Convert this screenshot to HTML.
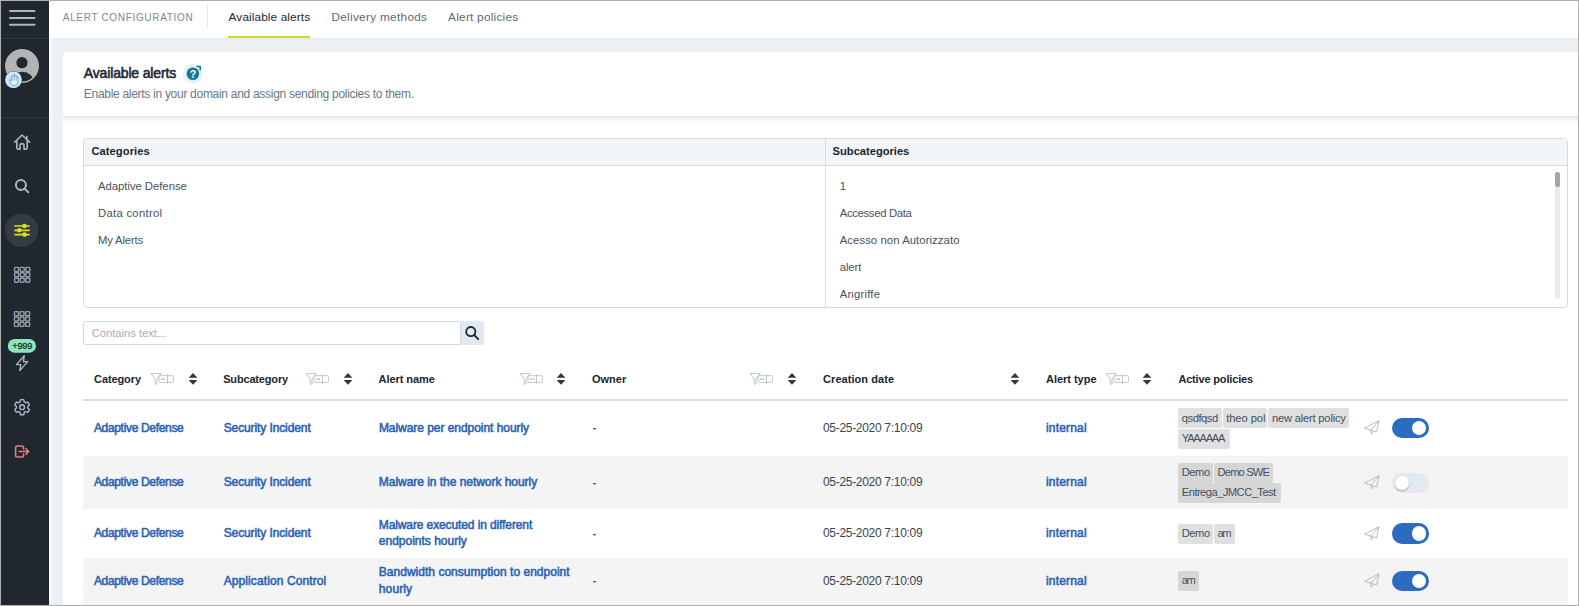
<!DOCTYPE html>
<html><head><meta charset="utf-8">
<style>
*{box-sizing:border-box;margin:0;padding:0}
html,body{width:1579px;height:606px;overflow:hidden;background:#edf1f4;font-family:"Liberation Sans",sans-serif;position:relative}
.a{position:absolute;white-space:nowrap}
#frame{position:absolute;left:0;top:0;width:1579px;height:606px;border:1px solid #afafaf;pointer-events:none;z-index:50}
.tog{position:absolute;width:37.3px;height:20.3px;border-radius:10.2px;background:#2b6cc0}
.tog::after{content:"";position:absolute;width:14.2px;height:14.2px;border-radius:50%;background:#fff;top:3.05px;left:20px}
.tog.off{background:#e3e9f0}
.tog.off::after{left:3px;box-shadow:0 1px 2px rgba(0,0,0,.3)}
</style></head>
<body>
<div style="position:absolute;left:49px;top:1px;width:1529px;height:37px;background:#fff;"></div>
<div style="position:absolute;left:49px;top:38px;width:3px;height:568px;background:#f6f8fa;"></div>
<div style="position:absolute;left:52px;top:38px;width:1526px;height:3px;background:linear-gradient(#e6eaed,#edf1f4);"></div>
<div style="position:absolute;left:63px;top:52px;width:1515px;height:64px;background:#fff;border-top-left-radius:5px;"></div>
<div style="position:absolute;left:63px;top:116px;width:1515px;height:490px;background:#fff;"></div>
<div style="position:absolute;left:63px;top:116px;width:1515px;height:9px;background:linear-gradient(#e6eaee,#f6f8f9 45%,#fff);"></div>
<div style="position:absolute;left:1px;top:1px;width:48px;height:605px;background:#20272f;"></div>
<div style="position:absolute;left:1px;top:38px;width:48px;height:1px;background:#30373f;"></div>
<div style="position:absolute;left:1px;top:117px;width:48px;height:1px;background:#30373f;"></div>
<svg style="position:absolute;left:0;top:0" width="50" height="606" viewBox="0 0 50 606"><g stroke="#a9b8c5" stroke-width="2" stroke-linecap="round"><line x1="10" y1="11" x2="34.5" y2="11"/><line x1="10" y1="18" x2="34.5" y2="18"/><line x1="10" y1="24.8" x2="34.5" y2="24.8"/></g><defs><clipPath id="avc"><circle cx="22" cy="66" r="15.5"/></clipPath></defs><circle cx="22" cy="66" r="17" fill="#b4b4b4"/><circle cx="22" cy="62.7" r="5.6" fill="#20272f"/><g clip-path="url(#avc)"><ellipse cx="22.5" cy="82" rx="11" ry="10.3" fill="#20272f"/></g><circle cx="13.5" cy="79.8" r="8.8" fill="#20272f" opacity="0.7"/><circle cx="13.5" cy="79.8" r="8.4" fill="#c9e9fa"/><path d="M11 84.2 L9.3 80.2 Q9.1 79.2 10 79.5 L11.5 81.2 V76.6 Q11.5 75.8 12.3 75.8 Q13.1 75.8 13.1 76.6 V75.3 Q13.1 74.5 13.9 74.5 Q14.7 74.5 14.7 75.3 V76 Q14.7 75.3 15.5 75.3 Q16.3 75.3 16.3 76 V77.3 Q16.3 76.6 17.1 76.6 Q17.9 76.6 17.9 77.3 V82.3 Q17.9 85.6 15.1 85.6 H12.9 Q11.6 85.6 11 84.2 Z" fill="#e8f6fd" stroke="#5d8fb6" stroke-width="0.75" stroke-linejoin="round"/><path d="M13.1 76.6 V80.6 M14.7 75.3 V80.6 M16.3 76 V80.6" stroke="#6d9cc0" stroke-width="0.6" fill="none"/><g stroke="#a9b8c5" stroke-width="1.6" fill="none" stroke-linecap="round" stroke-linejoin="round"><path d="M14.6 142.2 L22 135 L29.6 142.2"/><path d="M16.8 140.5 V147.8 Q16.8 149.2 18.2 149.2 H20 V145.3 Q20 143.6 22 143.6 Q24 143.6 24 145.3 V149.2 H25.8 Q27.2 149.2 27.2 147.8 V140.5"/><path d="M26.8 136.4 V139.2"/></g><g stroke="#a9b8c5" stroke-width="2" fill="none" stroke-linecap="round"><circle cx="20.9" cy="185" r="5"/><line x1="24.6" y1="188.7" x2="28.4" y2="192.4"/></g><circle cx="21.5" cy="230.3" r="16.7" fill="#343b43"/><g stroke="#d7e41b" stroke-width="1.7" stroke-linecap="round"><line x1="15" y1="226" x2="29" y2="226"/><line x1="15" y1="230.3" x2="29" y2="230.3"/><line x1="15" y1="234.6" x2="29" y2="234.6"/></g><g fill="#d7e41b"><circle cx="24.5" cy="226" r="2.3"/><circle cx="19.3" cy="230.3" r="2.3"/><circle cx="24.5" cy="234.6" r="2.3"/></g><rect x="14.6" y="267.4" width="4.0" height="4.0" rx="0.7" fill="#20272f" stroke="#8f9daa" stroke-width="1.4"/><rect x="14.6" y="272.8" width="4.0" height="4.0" rx="0.7" fill="#20272f" stroke="#8f9daa" stroke-width="1.4"/><rect x="14.6" y="278.2" width="4.0" height="4.0" rx="0.7" fill="#20272f" stroke="#8f9daa" stroke-width="1.4"/><rect x="20.2" y="267.4" width="4.0" height="4.0" rx="0.7" fill="#20272f" stroke="#8f9daa" stroke-width="1.4"/><rect x="20.2" y="272.8" width="4.0" height="4.0" rx="0.7" fill="#20272f" stroke="#8f9daa" stroke-width="1.4"/><rect x="20.2" y="278.2" width="4.0" height="4.0" rx="0.7" fill="#20272f" stroke="#8f9daa" stroke-width="1.4"/><rect x="25.8" y="267.4" width="4.0" height="4.0" rx="0.7" fill="#20272f" stroke="#8f9daa" stroke-width="1.4"/><rect x="25.8" y="272.8" width="4.0" height="4.0" rx="0.7" fill="#20272f" stroke="#8f9daa" stroke-width="1.4"/><rect x="25.8" y="278.2" width="4.0" height="4.0" rx="0.7" fill="#20272f" stroke="#8f9daa" stroke-width="1.4"/><rect x="14.4" y="311.6" width="4.0" height="4.0" rx="0.7" fill="#20272f" stroke="#8f9daa" stroke-width="1.4"/><rect x="14.4" y="317.0" width="4.0" height="4.0" rx="0.7" fill="#20272f" stroke="#8f9daa" stroke-width="1.4"/><rect x="14.4" y="322.4" width="4.0" height="4.0" rx="0.7" fill="#20272f" stroke="#8f9daa" stroke-width="1.4"/><rect x="20.0" y="311.6" width="4.0" height="4.0" rx="0.7" fill="#20272f" stroke="#8f9daa" stroke-width="1.4"/><rect x="20.0" y="317.0" width="4.0" height="4.0" rx="0.7" fill="#20272f" stroke="#8f9daa" stroke-width="1.4"/><rect x="20.0" y="322.4" width="4.0" height="4.0" rx="0.7" fill="#20272f" stroke="#8f9daa" stroke-width="1.4"/><rect x="25.6" y="311.6" width="4.0" height="4.0" rx="0.7" fill="#20272f" stroke="#8f9daa" stroke-width="1.4"/><rect x="25.6" y="317.0" width="4.0" height="4.0" rx="0.7" fill="#20272f" stroke="#8f9daa" stroke-width="1.4"/><rect x="25.6" y="322.4" width="4.0" height="4.0" rx="0.7" fill="#20272f" stroke="#8f9daa" stroke-width="1.4"/><rect x="7.8" y="339" width="28.2" height="13.8" rx="6.9" fill="#8ee6bf"/><text x="12.2" y="348.9" font-family="Liberation Sans" font-size="9.2" fill="#1b382c" stroke="#1b382c" stroke-width="0.3" textLength="20.2" lengthAdjust="spacing">+999</text><path d="M24.2 355.8 L16.4 364.6 H20.8 L19.8 370.6 L27.6 361.6 H23.4 Z" stroke="#a9b8c5" stroke-width="1.4" fill="none" stroke-linejoin="round"/><path d="M19.96 401.92 L20.50 399.67 L23.70 399.67 L24.24 401.92 L25.61 402.71 L27.82 402.05 L29.42 404.82 L27.74 406.41 L27.74 407.99 L29.42 409.58 L27.82 412.35 L25.61 411.69 L24.24 412.48 L23.70 414.73 L20.50 414.73 L19.96 412.48 L18.59 411.69 L16.38 412.35 L14.78 409.58 L16.46 407.99 L16.46 406.41 L14.78 404.82 L16.38 402.05 L18.59 402.71 Z" stroke="#a9b8c5" stroke-width="1.4" fill="none" stroke-linejoin="round"/><circle cx="22.1" cy="407.2" r="2.4" stroke="#a9b8c5" stroke-width="1.4" fill="none"/><g stroke="#e07f7e" stroke-width="1.6" fill="none" stroke-linecap="round" stroke-linejoin="round"><path d="M23.6 448.9 V447.6 Q23.6 446 22 446 H17.2 Q15.6 446 15.6 447.6 V455.4 Q15.6 457 17.2 457 H22 Q23.6 457 23.6 455.4 V454.1"/><path d="M19.3 451.5 H28.4 M26.1 448.9 L28.6 451.5 L26.1 454.1"/></g></svg>
<div style="position:absolute;left:207px;top:5px;width:1px;height:23px;background:#e1e7ec;"></div>
<div style="position:absolute;left:228px;top:36px;width:82px;height:2px;background:#c7d92b;"></div>
<svg style="position:absolute;left:181px;top:62px" width="24" height="24" viewBox="181 62 24 24"><circle cx="192.9" cy="73.8" r="10" fill="#e5f1f3"/><circle cx="192.9" cy="73.8" r="6.3" fill="#18788f"/><text x="192.9" y="77.6" text-anchor="middle" font-family="Liberation Sans" font-weight="bold" font-size="10.5" fill="#fff">?</text><path d="M196.4 66.6 H200.2 V70.4" stroke="#18798f" stroke-width="1.5" fill="none"/></svg>
<div style="position:absolute;left:83px;top:138px;width:1485px;height:170px;border:1px solid #d2dce5;border-radius:4px;overflow:hidden;background:#fff"><div style="position:absolute;left:0;top:0;width:1485px;height:27px;background:#f3f6f9;border-bottom:1px solid #d2dce5"></div><div style="position:absolute;left:741px;top:0;width:1px;height:170px;background:#d2dce5"></div></div>
<div style="position:absolute;left:1555px;top:172px;width:5px;height:127px;background:#ebebeb;border-radius:2.5px;"></div>
<div style="position:absolute;left:1555px;top:172px;width:5px;height:15px;background:#a5a5a5;border-radius:2.5px;"></div>
<div style="position:absolute;left:83px;top:321px;width:378px;height:24px;border:1px solid #cfdae3;border-radius:3px 0 0 3px;background:#fff"></div>
<div style="position:absolute;left:461px;top:321px;width:23px;height:24px;background:#e2e9f0;border-radius:0 3px 3px 0;"></div>
<svg style="position:absolute;left:460px;top:321px" width="24" height="24" viewBox="460 321 24 24"><g stroke="#1b2631" stroke-width="1.8" fill="none" stroke-linecap="round"><circle cx="470.8" cy="331.6" r="4.6"/><line x1="474.2" y1="335" x2="478.3" y2="339.1"/></g></svg>
<svg style="position:absolute;left:148px;top:368px" width="30" height="22" viewBox="0 0 30 22"><g stroke="#b9c0c7" stroke-width="0.9" fill="none" stroke-linejoin="round"><path d="M3 5.6 H13.4 L9 11 V15.8 L7.2 16.4 V11 Z"/><rect x="11" y="7.7" width="14.4" height="6.7" rx="0.8"/><line x1="19.5" y1="6.2" x2="19.5" y2="15.8"/></g><g fill="#b9c0c7"><rect x="13.3" y="10.2" width="1.6" height="1.8"/><rect x="15.6" y="10.2" width="1.6" height="1.8"/></g></svg>
<svg style="position:absolute;left:302.8px;top:368px" width="30" height="22" viewBox="0 0 30 22"><g stroke="#b9c0c7" stroke-width="0.9" fill="none" stroke-linejoin="round"><path d="M3 5.6 H13.4 L9 11 V15.8 L7.2 16.4 V11 Z"/><rect x="11" y="7.7" width="14.4" height="6.7" rx="0.8"/><line x1="19.5" y1="6.2" x2="19.5" y2="15.8"/></g><g fill="#b9c0c7"><rect x="13.3" y="10.2" width="1.6" height="1.8"/><rect x="15.6" y="10.2" width="1.6" height="1.8"/></g></svg>
<svg style="position:absolute;left:516.6px;top:368px" width="30" height="22" viewBox="0 0 30 22"><g stroke="#b9c0c7" stroke-width="0.9" fill="none" stroke-linejoin="round"><path d="M3 5.6 H13.4 L9 11 V15.8 L7.2 16.4 V11 Z"/><rect x="11" y="7.7" width="14.4" height="6.7" rx="0.8"/><line x1="19.5" y1="6.2" x2="19.5" y2="15.8"/></g><g fill="#b9c0c7"><rect x="13.3" y="10.2" width="1.6" height="1.8"/><rect x="15.6" y="10.2" width="1.6" height="1.8"/></g></svg>
<svg style="position:absolute;left:747.3px;top:368px" width="30" height="22" viewBox="0 0 30 22"><g stroke="#b9c0c7" stroke-width="0.9" fill="none" stroke-linejoin="round"><path d="M3 5.6 H13.4 L9 11 V15.8 L7.2 16.4 V11 Z"/><rect x="11" y="7.7" width="14.4" height="6.7" rx="0.8"/><line x1="19.5" y1="6.2" x2="19.5" y2="15.8"/></g><g fill="#b9c0c7"><rect x="13.3" y="10.2" width="1.6" height="1.8"/><rect x="15.6" y="10.2" width="1.6" height="1.8"/></g></svg>
<svg style="position:absolute;left:1103px;top:368px" width="30" height="22" viewBox="0 0 30 22"><g stroke="#b9c0c7" stroke-width="0.9" fill="none" stroke-linejoin="round"><path d="M3 5.6 H13.4 L9 11 V15.8 L7.2 16.4 V11 Z"/><rect x="11" y="7.7" width="14.4" height="6.7" rx="0.8"/><line x1="19.5" y1="6.2" x2="19.5" y2="15.8"/></g><g fill="#b9c0c7"><rect x="13.3" y="10.2" width="1.6" height="1.8"/><rect x="15.6" y="10.2" width="1.6" height="1.8"/></g></svg>
<svg style="position:absolute;left:186.7px;top:368px" width="12" height="22" viewBox="186.7 368 12 22"><path d="M188.29999999999998 377.8 L192.7 373.1 L197.1 377.8 Z M188.29999999999998 380 L197.1 380 L192.7 384.7 Z" fill="#2e3944"/></svg>
<svg style="position:absolute;left:341.5px;top:368px" width="12" height="22" viewBox="341.5 368 12 22"><path d="M343.1 377.8 L347.5 373.1 L351.9 377.8 Z M343.1 380 L351.9 380 L347.5 384.7 Z" fill="#2e3944"/></svg>
<svg style="position:absolute;left:555px;top:368px" width="12" height="22" viewBox="555 368 12 22"><path d="M556.6 377.8 L561 373.1 L565.4 377.8 Z M556.6 380 L565.4 380 L561 384.7 Z" fill="#2e3944"/></svg>
<svg style="position:absolute;left:786px;top:368px" width="12" height="22" viewBox="786 368 12 22"><path d="M787.6 377.8 L792 373.1 L796.4 377.8 Z M787.6 380 L796.4 380 L792 384.7 Z" fill="#2e3944"/></svg>
<svg style="position:absolute;left:1008.6px;top:368px" width="12" height="22" viewBox="1008.6 368 12 22"><path d="M1010.2 377.8 L1014.6 373.1 L1019.0 377.8 Z M1010.2 380 L1019.0 380 L1014.6 384.7 Z" fill="#2e3944"/></svg>
<svg style="position:absolute;left:1141px;top:368px" width="12" height="22" viewBox="1141 368 12 22"><path d="M1142.6 377.8 L1147 373.1 L1151.4 377.8 Z M1142.6 380 L1151.4 380 L1147 384.7 Z" fill="#2e3944"/></svg>
<div style="position:absolute;left:83px;top:399px;width:1485px;height:2px;background:#d4dfe9;"></div>
<div style="position:absolute;left:83px;top:456px;width:1485px;height:53px;background:#f4f4f4;"></div>
<div style="position:absolute;left:83px;top:558px;width:1485px;height:48px;background:#f4f4f4;"></div>
<div style="position:absolute;left:593px;top:428px;width:3px;height:1px;background:#2a62b6;"></div>
<div style="position:absolute;left:593px;top:429px;width:3px;height:1px;background:rgba(42,98,182,0.35);"></div>
<svg style="position:absolute;left:1360px;top:416.3px" width="24" height="24" viewBox="1360 416.3 24 24"><g stroke="#b5b5b5" stroke-width="0.9" fill="none" stroke-linejoin="round" transform="translate(0 0.0)"><path d="M1379.1 421 L1364.6 428.4 L1370.9 430.5 L1376.5 432.3 Z M1379.1 421 L1370.9 430.5 L1371.2 434.4 L1373.4 431.3"/></g></svg>
<div style="position:absolute;left:593px;top:483px;width:3px;height:1px;background:#2a62b6;"></div>
<div style="position:absolute;left:593px;top:484px;width:3px;height:1px;background:rgba(42,98,182,0.35);"></div>
<svg style="position:absolute;left:1360px;top:470.8px" width="24" height="24" viewBox="1360 470.8 24 24"><g stroke="#b5b5b5" stroke-width="0.9" fill="none" stroke-linejoin="round" transform="translate(0 54.5)"><path d="M1379.1 421 L1364.6 428.4 L1370.9 430.5 L1376.5 432.3 Z M1379.1 421 L1370.9 430.5 L1371.2 434.4 L1373.4 431.3"/></g></svg>
<div style="position:absolute;left:593px;top:534px;width:3px;height:1px;background:#2a62b6;"></div>
<div style="position:absolute;left:593px;top:535px;width:3px;height:1px;background:rgba(42,98,182,0.35);"></div>
<svg style="position:absolute;left:1360px;top:521.6px" width="24" height="24" viewBox="1360 521.6 24 24"><g stroke="#b5b5b5" stroke-width="0.9" fill="none" stroke-linejoin="round" transform="translate(0 105.30000000000001)"><path d="M1379.1 421 L1364.6 428.4 L1370.9 430.5 L1376.5 432.3 Z M1379.1 421 L1370.9 430.5 L1371.2 434.4 L1373.4 431.3"/></g></svg>
<div style="position:absolute;left:593px;top:581px;width:3px;height:1px;background:#2a62b6;"></div>
<div style="position:absolute;left:593px;top:582px;width:3px;height:1px;background:rgba(42,98,182,0.35);"></div>
<svg style="position:absolute;left:1360px;top:569.2px" width="24" height="24" viewBox="1360 569.2 24 24"><g stroke="#b5b5b5" stroke-width="0.9" fill="none" stroke-linejoin="round" transform="translate(0 152.90000000000003)"><path d="M1379.1 421 L1364.6 428.4 L1370.9 430.5 L1376.5 432.3 Z M1379.1 421 L1370.9 430.5 L1371.2 434.4 L1373.4 431.3"/></g></svg>
<div style="position:absolute;left:1178.2px;top:408.2px;width:43.5px;height:20px;background:rgba(0,0,0,0.12);border-radius:2px;"></div>
<div style="position:absolute;left:1222.6px;top:408.2px;width:44.6px;height:20px;background:rgba(0,0,0,0.12);border-radius:2px;"></div>
<div style="position:absolute;left:1268.4px;top:408.2px;width:80.9px;height:20px;background:rgba(0,0,0,0.12);border-radius:2px;"></div>
<div style="position:absolute;left:1178.2px;top:428.5px;width:51.4px;height:20px;background:rgba(0,0,0,0.12);border-radius:2px;"></div>
<div style="position:absolute;left:1178.2px;top:462.7px;width:34.4px;height:20px;background:rgba(0,0,0,0.12);border-radius:2px;"></div>
<div style="position:absolute;left:1214px;top:462.7px;width:58.5px;height:20px;background:rgba(0,0,0,0.12);border-radius:2px;"></div>
<div style="position:absolute;left:1178.2px;top:483.1px;width:102.5px;height:20px;background:rgba(0,0,0,0.12);border-radius:2px;"></div>
<div style="position:absolute;left:1178.1px;top:523.7px;width:34.7px;height:20px;background:rgba(0,0,0,0.12);border-radius:2px;"></div>
<div style="position:absolute;left:1213.8px;top:523.7px;width:20.8px;height:20px;background:rgba(0,0,0,0.12);border-radius:2px;"></div>
<div style="position:absolute;left:1178.1px;top:571.1px;width:20.7px;height:20px;background:rgba(0,0,0,0.12);border-radius:2px;"></div>
<div class="tog" style="left:1392px;top:418.1px"></div>
<div class="tog off" style="left:1392px;top:472.8px"></div>
<div class="tog" style="left:1392px;top:523.4px"></div>
<div class="tog" style="left:1392px;top:571px"></div>
<div class="a" style="left:62.80px;top:13px;font-size:10px;line-height:10px;color:#7b8895;letter-spacing:0.669px;">ALERT CONFIGURATION</div>
<div class="a" style="left:228.60px;top:12px;font-size:11.8px;line-height:11.8px;color:#1c2631;letter-spacing:0.114px;">Available alerts</div>
<div class="a" style="left:331.40px;top:12px;font-size:11.8px;line-height:11.8px;color:#5b6976;letter-spacing:0.298px;">Delivery methods</div>
<div class="a" style="left:448.10px;top:12px;font-size:11.8px;line-height:11.8px;color:#5b6976;letter-spacing:0.248px;">Alert policies</div>
<div class="a" style="left:83.80px;top:66px;font-size:14px;line-height:14px;color:#1b2631;-webkit-text-stroke:0.55px #1b2631;letter-spacing:-0.152px;">Available alerts</div>
<div class="a" style="left:83.80px;top:88px;font-size:12px;line-height:12px;color:#6a7784;letter-spacing:-0.291px;">Enable alerts in your domain and assign sending policies to them.</div>
<div class="a" style="left:91.40px;top:146px;font-size:11.2px;line-height:11.2px;color:#1b2631;font-weight:700;letter-spacing:0.056px;">Categories</div>
<div class="a" style="left:832.60px;top:146px;font-size:11.2px;line-height:11.2px;color:#1b2631;font-weight:700;letter-spacing:-0.031px;">Subcategories</div>
<div class="a" style="left:98.00px;top:181px;font-size:11.3px;line-height:11.3px;color:#47525e;letter-spacing:-0.026px;">Adaptive Defense</div>
<div class="a" style="left:98.00px;top:208px;font-size:11.3px;line-height:11.3px;color:#47525e;letter-spacing:0.282px;">Data control</div>
<div class="a" style="left:98.00px;top:235px;font-size:11.3px;line-height:11.3px;color:#47525e;letter-spacing:-0.166px;">My Alerts</div>
<div class="a" style="left:839.70px;top:181px;font-size:11.3px;line-height:11.3px;color:#47525e;height:119px;overflow:hidden;">1</div>
<div class="a" style="left:839.70px;top:208px;font-size:11.3px;line-height:11.3px;color:#47525e;letter-spacing:-0.316px;height:92px;overflow:hidden;">Accessed Data</div>
<div class="a" style="left:839.70px;top:235px;font-size:11.3px;line-height:11.3px;color:#47525e;letter-spacing:0.081px;height:65px;overflow:hidden;">Acesso non Autorizzato</div>
<div class="a" style="left:839.70px;top:262px;font-size:11.3px;line-height:11.3px;color:#47525e;letter-spacing:-0.084px;height:38px;overflow:hidden;">alert</div>
<div class="a" style="left:839.70px;top:289px;font-size:11.3px;line-height:11.3px;color:#47525e;letter-spacing:0.229px;height:11px;overflow:hidden;">Angriffe</div>
<div class="a" style="left:91.70px;top:328px;font-size:11.2px;line-height:11.2px;color:#a2aebb;">Contains text...</div>
<div class="a" style="left:94.10px;top:374px;font-size:11px;line-height:11px;color:#1b2631;font-weight:700;letter-spacing:-0.109px;">Category</div>
<div class="a" style="left:223.20px;top:374px;font-size:11px;line-height:11px;color:#1b2631;font-weight:700;letter-spacing:-0.171px;">Subcategory</div>
<div class="a" style="left:378.50px;top:374px;font-size:11px;line-height:11px;color:#1b2631;font-weight:700;letter-spacing:-0.059px;">Alert name</div>
<div class="a" style="left:592.00px;top:374px;font-size:11px;line-height:11px;color:#1b2631;font-weight:700;">Owner</div>
<div class="a" style="left:823.10px;top:374px;font-size:11px;line-height:11px;color:#1b2631;font-weight:700;letter-spacing:0.052px;">Creation date</div>
<div class="a" style="left:1046.00px;top:374px;font-size:11px;line-height:11px;color:#1b2631;font-weight:700;letter-spacing:-0.024px;">Alert type</div>
<div class="a" style="left:1178.40px;top:374px;font-size:11px;line-height:11px;color:#1b2631;font-weight:700;letter-spacing:-0.165px;">Active policies</div>
<div class="a" style="left:93.90px;top:422px;font-size:12px;line-height:12px;color:#2a62b6;-webkit-text-stroke:0.55px #2a62b6;letter-spacing:-0.324px;">Adaptive Defense</div>
<div class="a" style="left:223.70px;top:422px;font-size:12px;line-height:12px;color:#2a62b6;-webkit-text-stroke:0.55px #2a62b6;letter-spacing:-0.105px;">Security Incident</div>
<div class="a" style="left:378.90px;top:422px;font-size:12px;line-height:12px;color:#2a62b6;-webkit-text-stroke:0.55px #2a62b6;letter-spacing:-0.047px;">Malware per endpoint hourly</div>
<div class="a" style="left:93.90px;top:476px;font-size:12px;line-height:12px;color:#2a62b6;-webkit-text-stroke:0.55px #2a62b6;letter-spacing:-0.324px;">Adaptive Defense</div>
<div class="a" style="left:223.70px;top:476px;font-size:12px;line-height:12px;color:#2a62b6;-webkit-text-stroke:0.55px #2a62b6;letter-spacing:-0.105px;">Security Incident</div>
<div class="a" style="left:378.80px;top:476px;font-size:12px;line-height:12px;color:#2a62b6;-webkit-text-stroke:0.55px #2a62b6;letter-spacing:-0.036px;">Malware in the network hourly</div>
<div class="a" style="left:93.90px;top:527px;font-size:12px;line-height:12px;color:#2a62b6;-webkit-text-stroke:0.55px #2a62b6;letter-spacing:-0.324px;">Adaptive Defense</div>
<div class="a" style="left:223.70px;top:527px;font-size:12px;line-height:12px;color:#2a62b6;-webkit-text-stroke:0.55px #2a62b6;letter-spacing:-0.105px;">Security Incident</div>
<div class="a" style="left:378.80px;top:519px;font-size:12px;line-height:12px;color:#2a62b6;-webkit-text-stroke:0.55px #2a62b6;letter-spacing:-0.111px;">Malware executed in different</div>
<div class="a" style="left:378.80px;top:535px;font-size:12px;line-height:12px;color:#2a62b6;-webkit-text-stroke:0.55px #2a62b6;">endpoints hourly</div>
<div class="a" style="left:93.90px;top:575px;font-size:12px;line-height:12px;color:#2a62b6;-webkit-text-stroke:0.55px #2a62b6;letter-spacing:-0.324px;">Adaptive Defense</div>
<div class="a" style="left:223.70px;top:575px;font-size:12px;line-height:12px;color:#2a62b6;-webkit-text-stroke:0.55px #2a62b6;letter-spacing:0.097px;">Application Control</div>
<div class="a" style="left:378.80px;top:566px;font-size:12px;line-height:12px;color:#2a62b6;-webkit-text-stroke:0.55px #2a62b6;letter-spacing:0.022px;">Bandwidth consumption to endpoint</div>
<div class="a" style="left:378.80px;top:583px;font-size:12px;line-height:12px;color:#2a62b6;-webkit-text-stroke:0.55px #2a62b6;letter-spacing:0.123px;">hourly</div>
<div class="a" style="left:823.00px;top:422px;font-size:12px;line-height:12px;color:#3a4551;letter-spacing:-0.305px;">05-25-2020 7:10:09</div>
<div class="a" style="left:1045.90px;top:422px;font-size:12px;line-height:12px;color:#2a62b6;-webkit-text-stroke:0.55px #2a62b6;letter-spacing:0.201px;">internal</div>
<div class="a" style="left:823.00px;top:476px;font-size:12px;line-height:12px;color:#3a4551;letter-spacing:-0.305px;">05-25-2020 7:10:09</div>
<div class="a" style="left:1045.90px;top:476px;font-size:12px;line-height:12px;color:#2a62b6;-webkit-text-stroke:0.55px #2a62b6;letter-spacing:0.201px;">internal</div>
<div class="a" style="left:823.00px;top:527px;font-size:12px;line-height:12px;color:#3a4551;letter-spacing:-0.305px;">05-25-2020 7:10:09</div>
<div class="a" style="left:1045.90px;top:527px;font-size:12px;line-height:12px;color:#2a62b6;-webkit-text-stroke:0.55px #2a62b6;letter-spacing:0.201px;">internal</div>
<div class="a" style="left:823.00px;top:575px;font-size:12px;line-height:12px;color:#3a4551;letter-spacing:-0.305px;">05-25-2020 7:10:09</div>
<div class="a" style="left:1045.90px;top:575px;font-size:12px;line-height:12px;color:#2a62b6;-webkit-text-stroke:0.55px #2a62b6;letter-spacing:0.201px;">internal</div>
<div class="a" style="left:1181.80px;top:413px;font-size:11.2px;line-height:11.2px;color:#46505b;letter-spacing:-0.460px;">qsdfqsd</div>
<div class="a" style="left:1226.20px;top:413px;font-size:11.2px;line-height:11.2px;color:#46505b;letter-spacing:-0.075px;">theo pol</div>
<div class="a" style="left:1272.00px;top:413px;font-size:11.2px;line-height:11.2px;color:#46505b;letter-spacing:-0.214px;">new alert policy</div>
<div class="a" style="left:1181.80px;top:433px;font-size:11.2px;line-height:11.2px;color:#46505b;letter-spacing:-1.290px;">YAAAAAA</div>
<div class="a" style="left:1181.80px;top:467px;font-size:11.2px;line-height:11.2px;color:#46505b;letter-spacing:-0.507px;">Demo</div>
<div class="a" style="left:1217.60px;top:467px;font-size:11.2px;line-height:11.2px;color:#46505b;letter-spacing:-0.882px;">Demo SWE</div>
<div class="a" style="left:1181.80px;top:487px;font-size:11.2px;line-height:11.2px;color:#46505b;letter-spacing:-0.550px;">Entrega_JMCC_Test</div>
<div class="a" style="left:1181.70px;top:528px;font-size:11.2px;line-height:11.2px;color:#46505b;letter-spacing:-0.473px;">Demo</div>
<div class="a" style="left:1217.40px;top:528px;font-size:11.2px;line-height:11.2px;color:#46505b;letter-spacing:-1.322px;">am</div>
<div class="a" style="left:1181.70px;top:575px;font-size:11.2px;line-height:11.2px;color:#46505b;letter-spacing:-1.422px;">am</div>
<div id="frame"></div>
</body></html>
